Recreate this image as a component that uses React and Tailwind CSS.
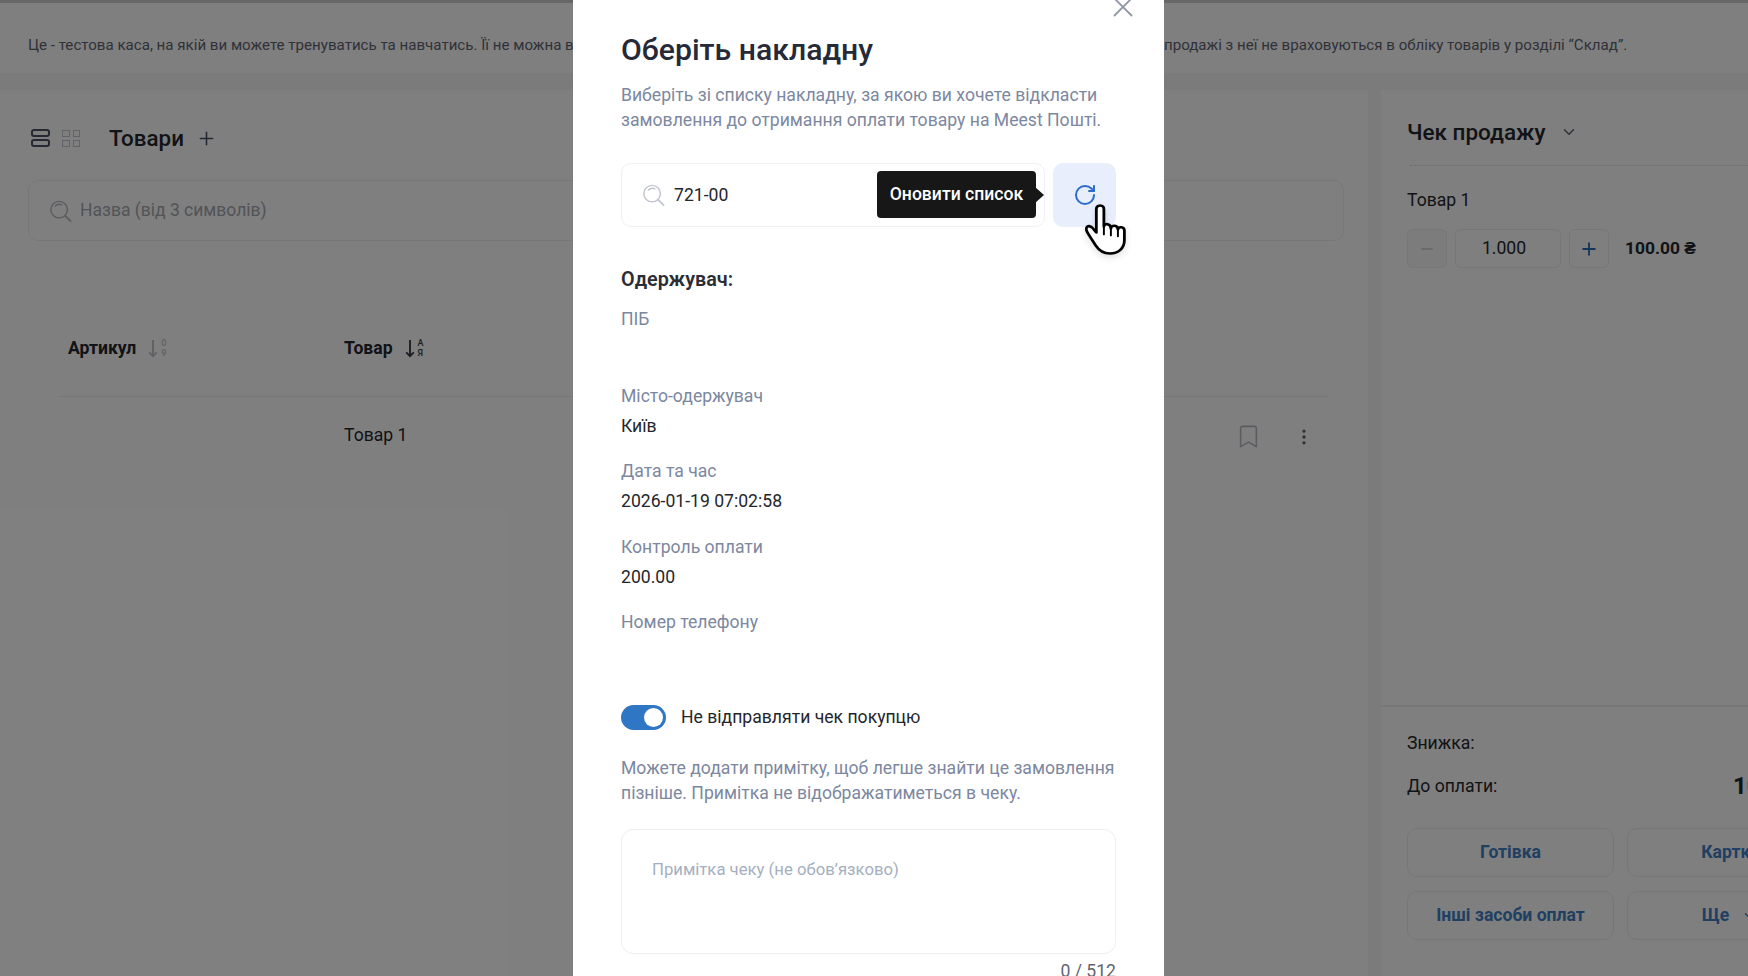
import { Bookmark, ChevronDown, EllipsisVertical, Minus, Plus, RotateCw } from 'lucide-react'

function SearchIcon({ className }) {
  return (
    <svg viewBox="0 0 24 24" fill="none" strokeLinecap="round" className={className}>
      <circle cx="10.5" cy="10.5" r="9" stroke="currentColor" strokeWidth="1.6" />
      <path d="M6.5 6.5a6 6 0 0 1 7-1.2" stroke="currentColor" strokeWidth="1.6" />
      <path d="M17 17l6 6" stroke="currentColor" strokeWidth="1.8" />
    </svg>
  )
}

function HandCursor({ className }) {
  return (
    <svg viewBox="0 0 38 52" preserveAspectRatio="none" className={className} fill="white" stroke="black" strokeWidth="2.6" strokeLinejoin="round" strokeLinecap="round">
      <path d="M14 1.5C11.5 1.5 10.5 3 10.5 5.5V29L7 24.5C5 22 2.5 22 1.5 24C0.5 26 1.5 28 3 30.5L10 42.5C13 47.5 17 50.5 23 50.5C31 50.5 36.5 45 36.5 37V27C36.5 23 31 22.5 30.5 26C30.5 21.5 24.5 20.5 24 25C24 20 18 19 17.5 23V5.5C17.5 3 16.5 1.5 14 1.5Z" />
      <path d="M17.5 23V31M24 25V32M30.5 26V33" fill="none" strokeWidth="1.8" />
    </svg>
  )
}

function SortIcon({ top, bottom, className }) {
  return (
    <div className={`flex items-center gap-[3px] ${className}`}>
      <svg viewBox="0 0 10 20" className="w-[10px] h-[19px]" fill="none" stroke="currentColor" strokeWidth="2">
        <path d="M5 1v17M1 14l4 4 4-4" />
      </svg>
      <div className="flex flex-col text-[9px] leading-[10px] font-medium">
        <span>{top}</span>
        <span>{bottom}</span>
      </div>
    </div>
  )
}

function Field({ label, value, clipped }) {
  return (
    <div className="mt-[21.5px]">
      <div className="text-[17.6px] leading-6 text-[#7c87a0]">{label}</div>
      <div className="mt-[6px] h-6 text-[17.6px] leading-6 text-[#24262c]">
        {clipped ? <div className="w-[38px] overflow-hidden whitespace-nowrap">{value}</div> : value}
      </div>
    </div>
  )
}

function PayButton({ children }) {
  return (
    <button className="h-[49px] w-[207px] shrink-0 rounded-[10px] border border-[#eceef1] flex items-center justify-center gap-3 text-[17.6px] font-bold text-[#3f80c4]">
      {children}
    </button>
  )
}

export default function App() {
  return (
    <div className="relative h-screen w-full overflow-hidden bg-[#f6f6f7] font-['Roboto',sans-serif] text-[#24262c]">
      {/* page behind the modal */}
      <div className="h-[3px] bg-[#cfcfcf]" />
      <div className="flex h-[70px] bg-white pl-[28px] pt-[31px] text-[15.1px] leading-[22px] text-[#5f6470] whitespace-nowrap">
        <div className="w-[545px] shrink-0 overflow-hidden">
          Це - тестова каса, на якій ви можете тренуватись та навчатись. Її не можна в
        </div>
        <div className="ml-[591px]">продажі з неї не враховуються в обліку товарів у розділі “Склад”.</div>
      </div>

      <div className="flex h-[903px] pt-[17px]">
        <div className="w-[1368px] shrink-0 bg-white pl-[28px] pr-[24px]">
          <div className="flex items-center h-[20px] mt-[38px] pl-[3px]">
            <div className="flex flex-col gap-[2px] w-[19px]">
              <div className="h-[8px] rounded-[3px] border-2 border-[#4b5268]" />
              <div className="h-[8px] rounded-[3px] border-2 border-[#4b5268]" />
            </div>
            <div className="ml-[12px] grid grid-cols-2 gap-[3px] w-[18px]">
              <div className="h-[7px] border border-[#c3c7d0]" />
              <div className="h-[7px] border border-[#c3c7d0]" />
              <div className="h-[7px] border border-[#c3c7d0]" />
              <div className="h-[7px] border border-[#c3c7d0]" />
            </div>
            <div className="ml-[29px] text-[22.4px] font-medium leading-[30px]">Товари</div>
            <Plus size={21} strokeWidth={1.8} className="ml-[12px] text-[#4b5268]" />
          </div>

          <div className="mt-[32px] flex items-center h-[61px] rounded-[10px] border border-[#f0f0f2] pl-[20px]">
            <SearchIcon className="w-[23px] h-[22px] text-[#b5b8c0]" />
            <span className="ml-2 text-[17.5px] text-[#a5a8b0]">Назва (від 3 символів)</span>
          </div>

          <div className="ml-[30px] mr-[16px] mt-[95px] flex h-[61px] items-start border-b border-[#eceef1]">
            <div className="flex items-center h-6 w-[286px] pl-[10px]">
              <div className="text-[17.6px] font-bold leading-6">Артикул</div>
              <SortIcon top="0" bottom="9" className="ml-3 text-[#bfc2c9]" />
            </div>
            <div className="flex items-center h-6">
              <div className="text-[17.6px] font-bold leading-6">Товар</div>
              <SortIcon top="А" bottom="Я" className="ml-3 text-[#3a3d47]" />
            </div>
          </div>

          <div className="mt-[26px] flex items-center h-6">
            <div className="ml-[316px] text-[17.6px] leading-6">Товар 1</div>
            <Bookmark size={27} strokeWidth={1.4} className="ml-[828px] mt-[3px] text-[#b5b8c0]" />
            <EllipsisVertical size={20} className="ml-[32px] mt-[3px] text-[#5f6470]" />
          </div>
        </div>

        <div className="w-[13px] shrink-0" />

        <div className="flex-1 min-w-0 flex flex-col bg-white">
          <div className="flex-1 pt-[27px]">
            <div className="flex items-center ml-[26px] h-[30px]">
              <div className="text-[22.5px] font-medium leading-[30px]">Чек продажу</div>
              <ChevronDown size={18} className="ml-[14px] text-[#5f6470]" />
            </div>
            <div className="ml-[29px] mt-[18px] border-t border-dotted border-[#d9dbe0]" />
            <div className="ml-[26px] mt-[22px] text-[17.6px] leading-6">Товар 1</div>
            <div className="ml-[26px] mt-[17px] flex items-center">
              <div className="flex h-[39px] w-[40px] items-center justify-center rounded-[6px] border border-[#eceef1] bg-[#f8f9fa]">
                <Minus size={18} className="text-[#c5c9d2]" />
              </div>
              <div className="ml-[8px] flex h-[39px] w-[106px] items-center justify-center rounded-[6px] border border-[#eceef1] pr-[8px] text-[17.6px]">
                1.000
              </div>
              <div className="ml-[8px] flex h-[39px] w-[40px] items-center justify-center rounded-[6px] border border-[#eceef1]">
                <Plus size={20} strokeWidth={2.2} className="text-[#2a6ab0]" />
              </div>
              <div className="ml-[16px] text-[17.4px] font-bold">100.00 ₴</div>
            </div>
          </div>

          <div className="h-[271px] shrink-0 border-t-2 border-[#f0f0f2] pl-[26px] pt-[24px]">
            <div className="text-[17.6px] leading-6">Знижка:</div>
            <div className="mt-[19px] flex items-center justify-between h-6 whitespace-nowrap">
              <span className="text-[17.6px]">До оплати:</span>
              <span className="text-[24px] font-bold w-[15px] overflow-hidden">100</span>
            </div>
            <div className="mt-[30px] flex gap-[13px]">
              <PayButton>Готівка</PayButton>
              <PayButton>Картка</PayButton>
            </div>
            <div className="mt-[14px] flex gap-[13px]">
              <PayButton>Інші засоби оплат</PayButton>
              <PayButton>
                Ще
                <ChevronDown size={18} />
              </PayButton>
            </div>
          </div>
        </div>
      </div>

      {/* overlay and modal */}
      <div className="absolute inset-0 bg-black/50 pl-[573px]">
        <div className="relative h-full w-[591px] overflow-hidden bg-white px-[48px] pt-[32px]">
          <svg viewBox="0 0 20 20" className="absolute left-[540px] -top-[3px] w-[20px] h-[20px] text-[#9097a6]" fill="none" stroke="currentColor" strokeWidth="1.8">
            <path d="M1 1l18 18M19 1L1 19" />
          </svg>

          <h2 className="text-[30.2px] font-medium leading-9 text-[#262a38] whitespace-nowrap">Оберіть накладну</h2>
          <p className="mt-[15px] text-[17.6px] leading-[25px] text-[#7c87a0] whitespace-nowrap">
            Виберіть зі списку накладну, за якою ви хочете відкласти
            <br />
            замовлення до отримання оплати товару на Meest Пошті.
          </p>

          <div className="mt-[30px] flex gap-[8px]">
            <div className="relative flex h-[64px] w-[425px] items-center rounded-[10px] border border-[#eef0f3] pl-[20px]">
              <SearchIcon className="w-[23px] h-[22px] text-[#bfc4ce]" />
              <span className="ml-[9px] text-[17.6px]">721-00</span>
              <div className="absolute left-[255px] top-[7px] flex h-[47px] w-[159px] items-center justify-center rounded-[4px] bg-[#171717] text-[17.6px] font-medium text-white whitespace-nowrap">
                Оновити список
                <div className="absolute -right-[8px] top-[16px] h-0 w-0 border-y-[8px] border-l-[9px] border-y-transparent border-l-[#171717]" />
              </div>
            </div>
            <div className="relative flex h-[64px] w-[63px] items-center justify-center rounded-[10px] bg-[#e8eefb]">
              <RotateCw size={24} strokeWidth={2} className="text-[#2d6cc9]" />
              <HandCursor className="absolute left-[32px] top-[41px] w-[41px] h-[51px] drop-shadow-md" />
            </div>
          </div>

          <div className="mt-[41px] text-[19.8px] font-semibold leading-6 text-[#2b2d36]">Одержувач:</div>
          <div className="mt-[15px] text-[17.6px] leading-6 text-[#7c87a0]">ПІБ</div>

          <div className="pt-[31px]">
            <Field label="Місто-одержувач" value="Київ" clipped />
          </div>
          <Field label="Дата та час" value="2026-01-19 07:02:58" />
          <Field label="Контроль оплати" value="200.00" />
          <div className="mt-[21px] text-[17.6px] leading-6 text-[#7c87a0]">Номер телефону</div>

          <div className="mt-[71px] flex items-center">
            <div className="flex h-[25px] w-[45px] items-center justify-end rounded-full bg-[#2f76c4] pr-[3px]">
              <div className="h-[19px] w-[19px] rounded-full bg-white" />
            </div>
            <span className="ml-[15px] text-[17.6px] leading-6">Не відправляти чек покупцю</span>
          </div>

          <p className="mt-[26px] text-[17.6px] leading-[25px] text-[#7c87a0] whitespace-nowrap">
            Можете додати примітку, щоб легше знайти це замовлення
            <br />
            пізніше. Примітка не відображатиметься в чеку.
          </p>

          <div className="mt-[23px] h-[125px] rounded-[12px] border border-[#eceef1] pl-[30px] pt-[28px] text-[16.7px] leading-6 text-[#a5afc0]">
            Примітка чеку (не обов’язково)
          </div>
          <div className="mt-[5px] text-right text-[17.6px] leading-6 text-[#5f6470]">0 / 512</div>
        </div>
      </div>
    </div>
  )
}
